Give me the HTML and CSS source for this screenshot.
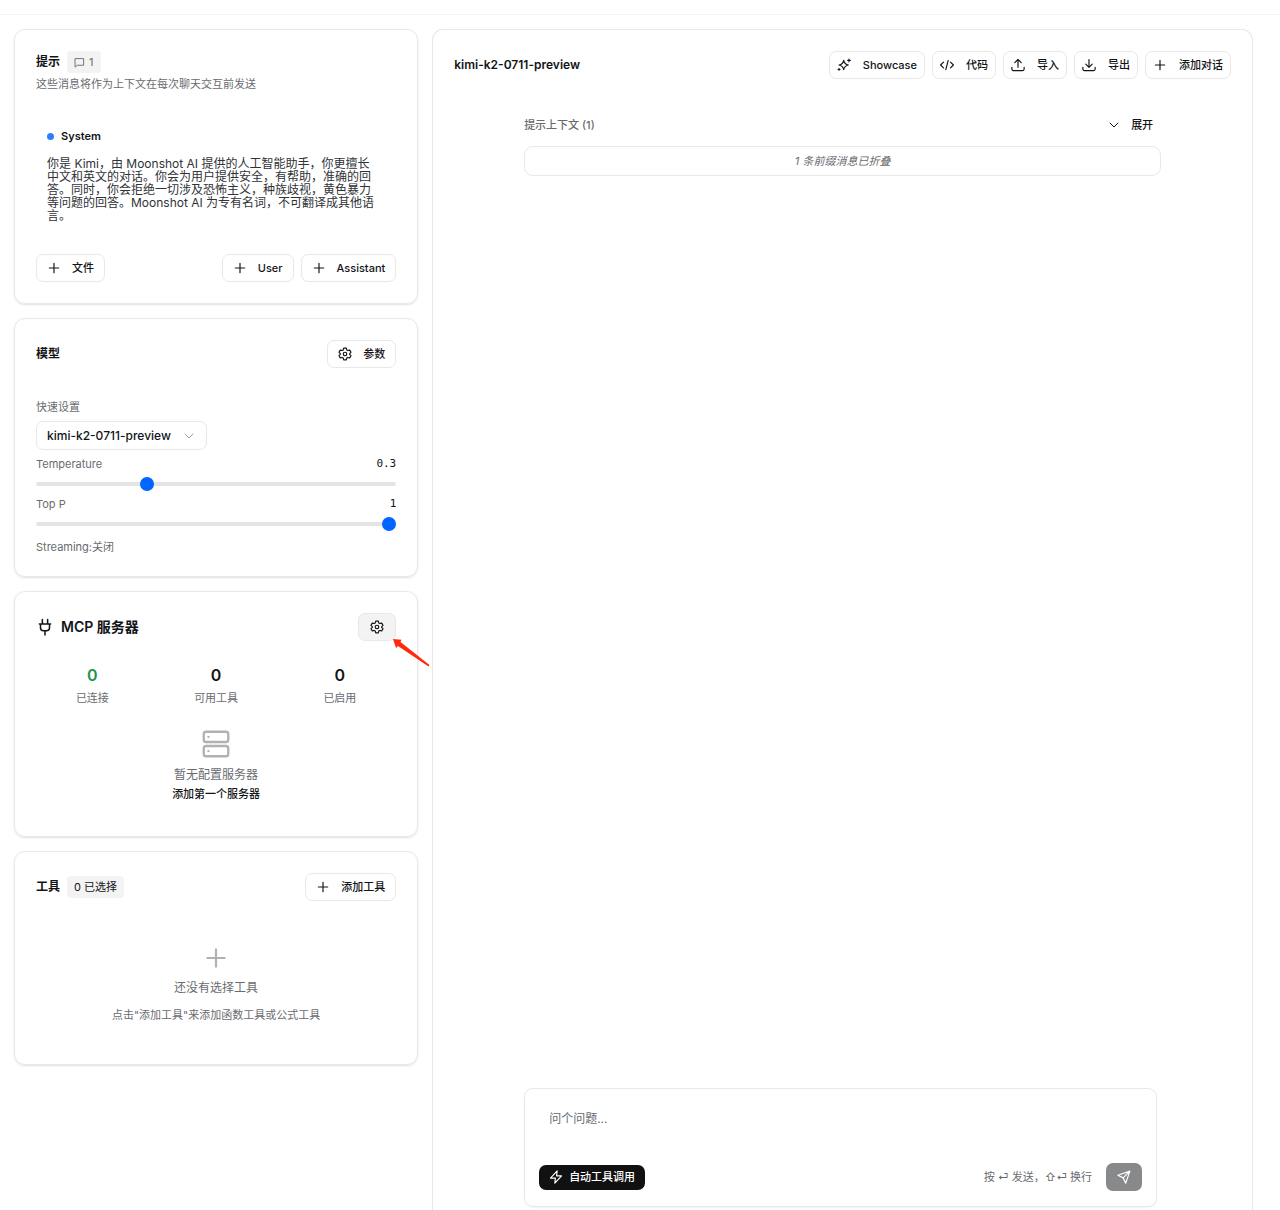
FILE: index.html
```html
<!DOCTYPE html>
<html lang="zh-CN">
<head>
<meta charset="utf-8">
<meta name="viewport" content="width=device-width, initial-scale=1">
<title>kimi-k2-0711-preview</title>
<link rel="stylesheet" href="styles.css">
</head>
<body>
<svg class="sprite" aria-hidden="true">
  <symbol id="plus" viewBox="0 0 24 24"><path d="M4 12h16M12 4v16"/></symbol>
  <symbol id="gear" viewBox="0 0 24 24"><path d="M9.800 2h4.400l.8 3 1.900 1.100 3.200-.8 2.200 3.800-2.300 2.300v1.200l2.300 2.300-2.200 3.800-3.200-.8L15 19l-.8 3H9.800L9 19l-1.900-1.100-3.200.8-2.200-3.800L4 12.600v-1.200L1.700 9.100l2.200-3.800 3.200.8L9 5z"/><circle cx="12" cy="12" r="3"/></symbol>
  <symbol id="message" viewBox="0 0 24 24"><path d="M3 3.500h18V18H7l-4 3.500z"/></symbol>
  <symbol id="chevron" viewBox="0 0 24 24"><path d="m4 8 8 8 8-8"/></symbol>
  <symbol id="plug" viewBox="0 0 24 24"><path d="M8.500 2v5M15.500 2v5M4.500 8h15M6 8v5c0 2.500 1.500 4 4 4h4c2.500 0 4-1.500 4-4V8M12 17v5.500"/></symbol>
  <symbol id="server" viewBox="0 0 24 24"><rect x="1.500" y="1.500" width="21" height="8.800" rx="2"/><rect x="1.500" y="13.700" width="21" height="8.800" rx="2"/><path d="M5.500 5.900h.01M5.500 18.100h.01"/></symbol>
  <symbol id="sparkle" viewBox="0 0 24 24"><path d="M11.500 4c1 5.300 2.700 7 8 8-5.300 1-7 2.700-8 8-1-5.300-2.700-7-8-8 5.300-1 7-2.700 8-8zM20.500 2v4.500M18.300 4.200h4.500M3.500 18v3M2 19.500h3"/></symbol>
  <symbol id="code" viewBox="0 0 24 24"><path d="m6 7-5 5 5 5M18 7l5 5-5 5M14 4l-4 16"/></symbol>
  <symbol id="upload" viewBox="0 0 24 24"><path d="M12 16V2.500M6.500 8 12 2.500 17.500 8M1.500 16v3a2.500 2.500 0 0 0 2.500 2.500h16a2.500 2.500 0 0 0 2.500-2.500v-3"/></symbol>
  <symbol id="download" viewBox="0 0 24 24"><path d="M12 2.500V16M6.500 10.500 12 16l5.500-5.500M1.500 16v3a2.500 2.500 0 0 0 2.500 2.500h16a2.500 2.500 0 0 0 2.500-2.500v-3"/></symbol>
  <symbol id="bolt" viewBox="0 0 24 24"><path d="M14 1.500 2.500 14H11l-1 8.500L21.500 10H13z"/></symbol>
  <symbol id="send" viewBox="0 0 24 24"><path d="M22 2 1.500 9l9 4.500L15 22.500zM22 2 10.500 13.500"/></symbol>
</svg>

<div class="topbar"></div>
<div class="layout">
  <aside class="sidebar">
    <section class="card card-prompt">
      <div class="title-row">
        <h2 class="title">提示</h2>
        <span class="badge badge-muted"><svg class="icon icon-xs"><use href="#message"/></svg>1</span>
      </div>
      <p class="subtitle">这些消息将作为上下文在每次聊天交互前发送</p>
      <div class="message">
        <h3 class="role"><span class="dot"></span>System</h3>
        <p class="message-text">你是 Kimi，由 Moonshot AI 提供的人工智能助手，你更擅长<br>中文和英文的对话。你会为用户提供安全，有帮助，准确的回<br>答。同时，你会拒绝一切涉及恐怖主义，种族歧视，黄色暴力<br>等问题的回答。Moonshot AI 为专有名词，不可翻译成其他语<br>言。</p>
      </div>
      <div class="row">
        <button class="btn" type="button"><svg class="icon"><use href="#plus"/></svg>文件</button>
        <div class="group">
          <button class="btn" type="button"><svg class="icon"><use href="#plus"/></svg>User</button>
          <button class="btn" type="button"><svg class="icon"><use href="#plus"/></svg>Assistant</button>
        </div>
      </div>
    </section>

    <section class="card card-model">
      <div class="row">
        <h2 class="title">模型</h2>
        <button class="btn" type="button"><svg class="icon"><use href="#gear"/></svg>参数</button>
      </div>
      <div class="settings">
        <label class="caption" for="model">快速设置</label>
        <div class="select-wrap">
          <select class="select" id="model"><option>kimi-k2-0711-preview</option></select>
          <svg class="icon icon-sm select-arrow"><use href="#chevron"/></svg>
        </div>
        <div class="row field"><label class="caption" for="temperature">Temperature</label><output class="value" for="temperature">0.3</output></div>
        <input class="slider" id="temperature" type="range" min="0" max="1" step="0.1" value="0.3">
        <div class="row field"><label class="caption" for="top-p">Top P</label><output class="value" for="top-p">1</output></div>
        <input class="slider" id="top-p" type="range" min="0" max="1" step="0.1" value="1">
        <p class="caption streaming">Streaming:关闭</p>
      </div>
    </section>

    <section class="card card-mcp">
      <div class="row">
        <h2 class="title title-lg"><svg class="icon icon-md"><use href="#plug"/></svg>MCP 服务器</h2>
        <div class="anchor">
          <button class="btn btn-icon" type="button" aria-label="设置"><svg class="icon"><use href="#gear"/></svg></button>
          <svg class="pointer" viewBox="0 0 38 30" aria-hidden="true"><path d="M1 1 9.500 1.800 8.500 4 37.500 27 36.500 28.500 6 8 4 10z"/></svg>
        </div>
      </div>
      <dl class="stats">
        <div class="stat"><dd class="number number-green">0</dd><dt class="caption">已连接</dt></div>
        <div class="stat"><dd class="number">0</dd><dt class="caption">可用工具</dt></div>
        <div class="stat"><dd class="number">0</dd><dt class="caption">已启用</dt></div>
      </dl>
      <div class="empty">
        <svg class="icon icon-xl"><use href="#server"/></svg>
        <p class="empty-title">暂无配置服务器</p>
        <button class="btn-link" type="button">添加第一个服务器</button>
      </div>
    </section>

    <section class="card card-tools">
      <div class="row">
        <div class="title-row">
          <h2 class="title">工具</h2>
          <span class="badge">0 已选择</span>
        </div>
        <button class="btn" type="button"><svg class="icon"><use href="#plus"/></svg>添加工具</button>
      </div>
      <div class="empty empty-tools">
        <svg class="icon icon-lg"><use href="#plus"/></svg>
        <p class="empty-title">还没有选择工具</p>
        <p class="caption">点击"添加工具"来添加函数工具或公式工具</p>
      </div>
    </section>
  </aside>

  <main class="main">
    <header class="row">
      <h1 class="title title-main">kimi-k2-0711-preview</h1>
      <div class="group">
        <button class="btn btn-tool" type="button"><svg class="icon"><use href="#sparkle"/></svg>Showcase</button>
        <button class="btn btn-tool" type="button"><svg class="icon"><use href="#code"/></svg>代码</button>
        <button class="btn btn-tool" type="button"><svg class="icon"><use href="#upload"/></svg>导入</button>
        <button class="btn btn-tool" type="button"><svg class="icon"><use href="#download"/></svg>导出</button>
        <button class="btn btn-tool" type="button"><svg class="icon"><use href="#plus"/></svg>添加对话</button>
      </div>
    </header>
    <div class="chat">
      <div class="row context">
        <h2 class="context-title">提示上下文 (1)</h2>
        <button class="btn btn-ghost" type="button"><svg class="icon icon-sm"><use href="#chevron"/></svg>展开</button>
      </div>
      <p class="collapsed">1 条前缀消息已折叠</p>
      <form class="composer">
        <textarea class="input" rows="1" aria-label="问个问题" placeholder="问个问题..."></textarea>
        <div class="row">
          <button class="btn-auto" type="button"><svg class="icon"><use href="#bolt"/></svg>自动工具调用</button>
          <div class="send-group">
            <span class="caption">按 ⏎ 发送，⇧⏎ 换行</span>
            <button class="btn-send" type="button" aria-label="发送"><svg class="icon"><use href="#send"/></svg></button>
          </div>
        </div>
      </form>
    </div>
  </main>
</div>
</body>
</html>
```

FILE: styles.css
```css
:root {
  --text: #121417;
  --muted: #696b6f;
  --line: #e8e8e9;
  --soft: #f3f3f3;
}

* { box-sizing: border-box; }

body {
  margin: 0;
  min-height: 100vh;
  display: flex;
  flex-direction: column;
  background: #fff;
  color: var(--text);
  font: 400 11px/16px Inter, "Noto Sans CJK SC", "DejaVu Sans", sans-serif;
}

h1, h2, h3, p, dl, dd { margin: 0; }
button, select, textarea { font: inherit; color: inherit; }
button { cursor: pointer; }

.sprite { position: absolute; width: 0; height: 0; }

.icon {
  flex: none;
  width: 14px;
  height: 14px;
  fill: none;
  stroke: currentColor;
  stroke-width: 2;
  stroke-linecap: round;
  stroke-linejoin: round;
}
.icon-xs { width: 11px; height: 11px; }
.icon-sm { width: 12px; height: 12px; }
.icon-md { width: 18px; height: 18px; }
.icon-lg { width: 26px; height: 26px; }
.icon-xl { width: 28px; height: 28px; }

.topbar { height: 15px; border-bottom: 1px solid #f3f3f4; }

.layout {
  flex: 1;
  display: grid;
  grid-template-columns: minmax(0, 33fr) minmax(0, 67fr);
  gap: 14px;
  padding: 14px 27px 0 14px;
}

.sidebar { display: flex; flex-direction: column; gap: 14px; }

.card {
  padding: 21px;
  border: 1px solid var(--line);
  border-radius: 11px;
  box-shadow: 0 1px 2px rgba(0, 0, 0, .12);
}
.card-mcp { min-height: 246px; }
.card-tools { min-height: 214px; }

.row { display: flex; align-items: center; justify-content: space-between; }
.group { display: flex; gap: 7px; }
.title-row { display: flex; align-items: center; gap: 7px; }

.title { font-size: 12px; font-weight: 700; }
.title-main { font-weight: 600; }
.title-lg { display: flex; align-items: center; gap: 7px; font-size: 14px; font-weight: 600; }

.badge {
  display: flex;
  align-items: center;
  gap: 4px;
  height: 22px;
  padding: 0 7px;
  border-radius: 4px;
  background: var(--soft);
}
.badge-muted { color: var(--muted); }

.subtitle, .caption { color: var(--muted); }
.subtitle { margin-top: 3px; }

.message { padding: 36px 11px 32px; }
.role { display: flex; align-items: center; gap: 7px; font-size: 11px; font-weight: 600; }
.dot { width: 7px; height: 7px; border-radius: 50%; background: #2b7fff; }
.message-text { margin-top: 13px; color: #2f3237; font-size: 12px; line-height: 13px; white-space: nowrap; }

.btn {
  display: flex;
  align-items: center;
  gap: 11px;
  height: 28px;
  padding: 0 10px;
  border: 1px solid var(--line);
  border-radius: 7px;
  background: #fff;
  font-weight: 500;
  white-space: nowrap;
}
.btn-tool { gap: 12px; padding: 0 7px; }
.btn-icon { padding: 0 11px; background: var(--soft); }
.btn-ghost { border-color: transparent; padding: 0 7px; }

.settings { display: flex; flex-direction: column; align-items: flex-start; margin-top: 31px; }
.select-wrap { position: relative; margin: 6px 0; }
.select {
  appearance: none;
  display: block;
  height: 29px;
  padding: 0 35px 0 10px;
  border: 1px solid var(--line);
  border-radius: 7px;
  background: #fff;
  font-size: 12px;
  font-weight: 500;
}
.select-arrow { position: absolute; right: 12px; top: 9px; color: #a0a1a4; pointer-events: none; }
.field { width: 100%; }
.value { font: 500 11px/16px "DejaVu Sans Mono", monospace; }
.slider { appearance: none; width: 100%; height: 14px; margin: 5px 0; background: none; }
.slider::-webkit-slider-runnable-track { height: 4px; border-radius: 2px; background: #e4e4e5; }
.slider::-webkit-slider-thumb { appearance: none; width: 14px; height: 14px; margin-top: -5px; border-radius: 50%; background: #0066ff; }
.streaming { margin-top: 3px; }

.anchor { position: relative; }
.pointer { position: absolute; left: 34px; top: 25px; width: 38px; height: 30px; fill: #ff2a0b; }

.stats { display: grid; grid-template-columns: repeat(3, 1fr); gap: 11px; margin-top: 24px; }
.stat { display: flex; flex-direction: column; align-items: center; gap: 5px; }
.number { font-size: 16px; line-height: 20px; font-weight: 600; }
.number-green { color: #22944a; }

.empty { display: flex; flex-direction: column; align-items: center; margin-top: 24px; }
.empty .icon { color: #b0b1b3; }
.empty-title { margin-top: 8px; color: var(--muted); font-size: 12px; line-height: 18px; }
.btn-link { margin-top: 2px; padding: 0; border: 0; background: none; font-weight: 500; }
.empty-tools { margin-top: 44px; }
.empty-tools .caption { margin-top: 10px; }

.main {
  display: flex;
  flex-direction: column;
  padding: 21px 21px 3px;
  border: 1px solid var(--line);
  border-bottom: 0;
  border-radius: 11px 11px 0 0;
}

.chat { flex: 1; display: flex; flex-direction: column; width: 100%; max-width: 637px; margin: 0 auto; padding-top: 32px; }
.context-title { color: var(--muted); font-size: 11px; font-weight: 500; }
.collapsed {
  margin-top: 7px;
  padding: 6px 0;
  border: 1px solid var(--line);
  border-radius: 9px;
  color: var(--muted);
  font-style: italic;
  text-align: center;
}

.composer {
  margin: auto 4px 0 0;
  padding: 21px 14px 15px;
  border: 1px solid var(--line);
  border-radius: 9px;
  box-shadow: 0 1px 2px rgba(0, 0, 0, .05);
}
.input {
  display: block;
  width: 100%;
  height: 53px;
  padding: 0 10px;
  border: 0;
  background: none;
  font-size: 12px;
  line-height: 18px;
  resize: none;
  outline: 0;
}
.input::placeholder { color: var(--muted); opacity: 1; }
.btn-auto, .btn-send { display: flex; align-items: center; border: 0; border-radius: 7px; color: #fff; font-weight: 500; }
.btn-auto { gap: 6px; height: 25px; padding: 0 10px; background: #111; }
.btn-send { justify-content: center; width: 36px; height: 28px; background: #88898a; }
.send-group { display: flex; align-items: center; gap: 14px; }
```
